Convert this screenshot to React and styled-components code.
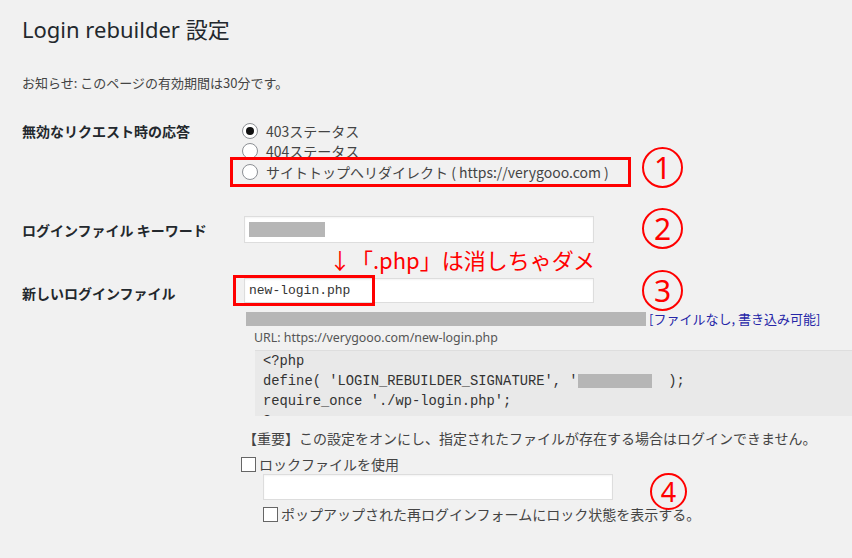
import React from 'react'
import styled, { createGlobalStyle } from 'styled-components'

const GlobalStyle = createGlobalStyle`
  html, body {
    margin: 0;
    background: #f1f1f1;
    overflow: hidden;
  }
  body {
    font-family: "Noto Sans CJK JP", "Noto Sans", sans-serif;
    color: #444;
  }
`

const Page = styled.div`
  position: relative;
  width: 852px;
  height: 558px;
  box-sizing: border-box;
  padding: 15px 0 0 22px;
  overflow: hidden;
`

const Title = styled.h1`
  margin: 0;
  font-family: "Noto Sans", "Noto Sans CJK JP", sans-serif;
  font-weight: 400;
  font-size: 22px;
  line-height: 29px;
  color: #23282d;
`

const Notice = styled.p`
  margin: 29px 0 0;
  font-size: 13px;
  line-height: 20px;
  color: #444;
`

const Row = styled.div`
  display: flex;
  margin-top: ${({ gap }) => gap}px;
`

const Label = styled.div`
  flex: none;
  width: 221px;
  padding-top: ${({ offset = 0 }) => offset}px;
  font-size: 14px;
  font-weight: 700;
  line-height: 20px;
  color: #23282d;
`

const Field = styled.div`
  flex: 1;
  min-width: 0;
`

const RadioRow = styled.div`
  display: flex;
  align-items: center;
  gap: 8px;
  height: 20px;
  margin-left: -1px;
  font-size: 14px;
  color: #444;
  white-space: nowrap;

  ${({ marked }) => marked && `
    position: relative;
    box-sizing: border-box;
    width: 401px;
    height: 30px;
    margin: -4px 0 0 -13px;
    padding-left: 9px;
    border: 3px solid #ff0000;
    background: #f1f1f1;
  `}
`

const Radio = styled.span`
  position: relative;
  flex: none;
  width: 14px;
  height: 14px;
  border-radius: 50%;
  border: 1px solid #8c8f94;
  background: #fff;

  &::after {
    content: '';
    display: ${({ checked }) => checked ? 'block' : 'none'};
    position: absolute;
    left: 3px;
    top: 3px;
    width: 8px;
    height: 8px;
    border-radius: 50%;
    background: #111;
  }
`

const InputWrap = styled.div`
  position: relative;
  width: 350px;
`

const TextInput = styled.div`
  box-sizing: border-box;
  width: ${({ width = 350 }) => width}px;
  height: ${({ height = 27 }) => height}px;
  margin-left: ${({ indent = 0 }) => indent}px;
  padding: 0 5px 0 4px;
  display: flex;
  align-items: center;
  background: #fff;
  border: 1px solid #ddd;
  box-shadow: inset 0 1px 2px rgba(0, 0, 0, .05);
  font-family: "Liberation Mono", "DejaVu Sans Mono", monospace;
  font-size: 13px;
  color: #333;
`

const Masked = styled.span`
  display: inline-block;
  flex: none;
  width: ${({ w }) => w}px;
  height: ${({ h = 14 }) => h}px;
  background: #b6b6b6;
  vertical-align: middle;
`

const RedFrame = styled.span`
  position: absolute;
  left: -10px;
  top: -3px;
  width: 142px;
  height: 31px;
  box-sizing: border-box;
  border: 3px solid #ff0000;
`

const Warning = styled.div`
  height: 35px;
  margin-left: 86px;
  font-size: 22px;
  line-height: 33px;
  color: #ff0000;
  white-space: nowrap;
`

const StatusLine = styled.div`
  display: flex;
  align-items: center;
  height: 14px;
  margin: 9px 0 0 3px;
  white-space: nowrap;
`

const StatusLink = styled.span`
  margin-left: 3px;
  font-size: 13px;
  line-height: 14px;
  color: #2626a8;
`

const UrlLine = styled.div`
  margin: 3px 0 0 11px;
  font-family: "Noto Sans", "Noto Sans CJK JP", sans-serif;
  font-size: 12.4px;
  line-height: 18px;
  color: #555;
`

const Code = styled.pre`
  box-sizing: border-box;
  height: 66px;
  margin: 3px 0 0 12px;
  padding: 1px 0 0 8px;
  overflow: hidden;
  background: #e9e9e9;
  border-top: 1px solid #dedede;
  font-family: "Liberation Mono", "DejaVu Sans Mono", monospace;
  font-size: 13.8px;
  line-height: 20px;
  color: #333;
`

const Note = styled.p`
  margin: 12px 0 0;
  font-size: 14px;
  line-height: 20px;
  color: #444;
  white-space: nowrap;
`

const CheckRow = styled.div`
  display: flex;
  align-items: center;
  gap: 3px;
  height: 20px;
  margin: ${({ gap = 0 }) => gap}px 0 0 ${({ indent = 0 }) => indent}px;
  font-size: 14px;
  color: #444;
  white-space: nowrap;
`

const Checkbox = styled.span`
  flex: none;
  width: 13px;
  height: 13px;
  border: 1px solid #666;
  background: #fff;
`

const Badge = styled.span`
  position: absolute;
  left: ${({ x }) => x}px;
  top: ${({ y }) => y}px;
  width: ${({ size = 41 }) => size}px;
  height: ${({ size = 41 }) => size}px;
  box-sizing: border-box;
  display: flex;
  align-items: center;
  justify-content: center;
  border: 2px solid #ff0000;
  border-radius: 50%;
  font-family: "Noto Sans", sans-serif;
  font-size: ${({ size = 41 }) => Math.round(size * 0.72)}px;
  line-height: 1;
  color: #ff0000;
`

export default function App() {
  return (
    <Page>
      <GlobalStyle />
      <Title>Login rebuilder 設定</Title>
      <Notice>お知らせ: このページの有効期間は30分です。</Notice>

      <Row gap={28}>
        <Label>無効なリクエスト時の応答</Label>
        <Field>
          <RadioRow><Radio checked />403ステータス</RadioRow>
          <RadioRow><Radio />404ステータス</RadioRow>
          <RadioRow marked><Radio />サイトトップへリダイレクト ( https://verygooo.com )</RadioRow>
        </Field>
      </Row>

      <Row gap={29}>
        <Label offset={4}>ログインファイル キーワード</Label>
        <Field>
          <TextInput indent={1}>
            <Masked w={76} h={15} />
          </TextInput>
          <Warning>↓「.php」は消しちゃダメ</Warning>
        </Field>
      </Row>

      <Row gap={0}>
        <Label offset={5}>新しいログインファイル</Label>
        <Field>
          <InputWrap>
            <TextInput indent={1} height={25}>new-login.php</TextInput>
            <RedFrame />
          </InputWrap>
          <StatusLine>
            <Masked w={400} h={14} />
            <StatusLink>[ファイルなし, 書き込み可能]</StatusLink>
          </StatusLine>
          <UrlLine>URL: https://verygooo.com/new-login.php</UrlLine>
          <Code>{'<?php\ndefine( \'LOGIN_REBUILDER_SIGNATURE\', \''}<Masked w={74} h={14} />{'  );\nrequire_once \'./wp-login.php\';\n?>'}</Code>
          <Note>【重要】この設定をオンにし、指定されたファイルが存在する場合はログインできません。</Note>
          <CheckRow gap={6} indent={-2}><Checkbox />ロックファイルを使用</CheckRow>
          <TextInput indent={20} height={26}></TextInput>
          <CheckRow gap={4} indent={20}><Checkbox />ポップアップされた再ログインフォームにロック状態を表示する。</CheckRow>
        </Field>
      </Row>

      <Badge x={642} y={147}>1</Badge>
      <Badge x={642} y={208}>2</Badge>
      <Badge x={642} y={270}>3</Badge>
      <Badge x={650} y={473} size={37}>4</Badge>
    </Page>
  )
}
